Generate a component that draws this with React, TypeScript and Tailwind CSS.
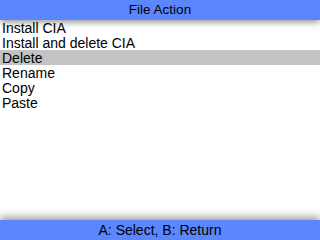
import React from "react";

const items = ["Install CIA", "Install and delete CIA", "Delete", "Rename", "Copy", "Paste"];

export default function App() {
  const selected = 2;
  return (
    <div className="flex h-[240px] w-[320px] flex-col overflow-hidden bg-white font-['Liberation_Sans',sans-serif] text-black">
      {/* Top bar */}
      <div className="relative z-10 flex h-[20px] items-center justify-center bg-[#5b86fd] text-[13.5px] shadow-[0_2px_7px_rgba(0,0,0,0.45)]">
        File Action
      </div>

      {/* Menu list */}
      <div className="flex-1">
        {items.map((label, i) => (
          <div
            key={label}
            className={`flex h-[15px] items-center pl-[2px] text-[14px] leading-none ${i === selected ? "bg-[#c3c3c3]" : ""}`}
          >
            {label}
          </div>
        ))}
      </div>

      {/* Bottom bar */}
      <div className="relative z-10 flex h-[20px] items-center justify-center bg-[#5b86fd] text-[14px] shadow-[0_-3px_8px_rgba(0,0,0,0.4)]">
        A: Select, B: Return
      </div>
    </div>
  );
}
